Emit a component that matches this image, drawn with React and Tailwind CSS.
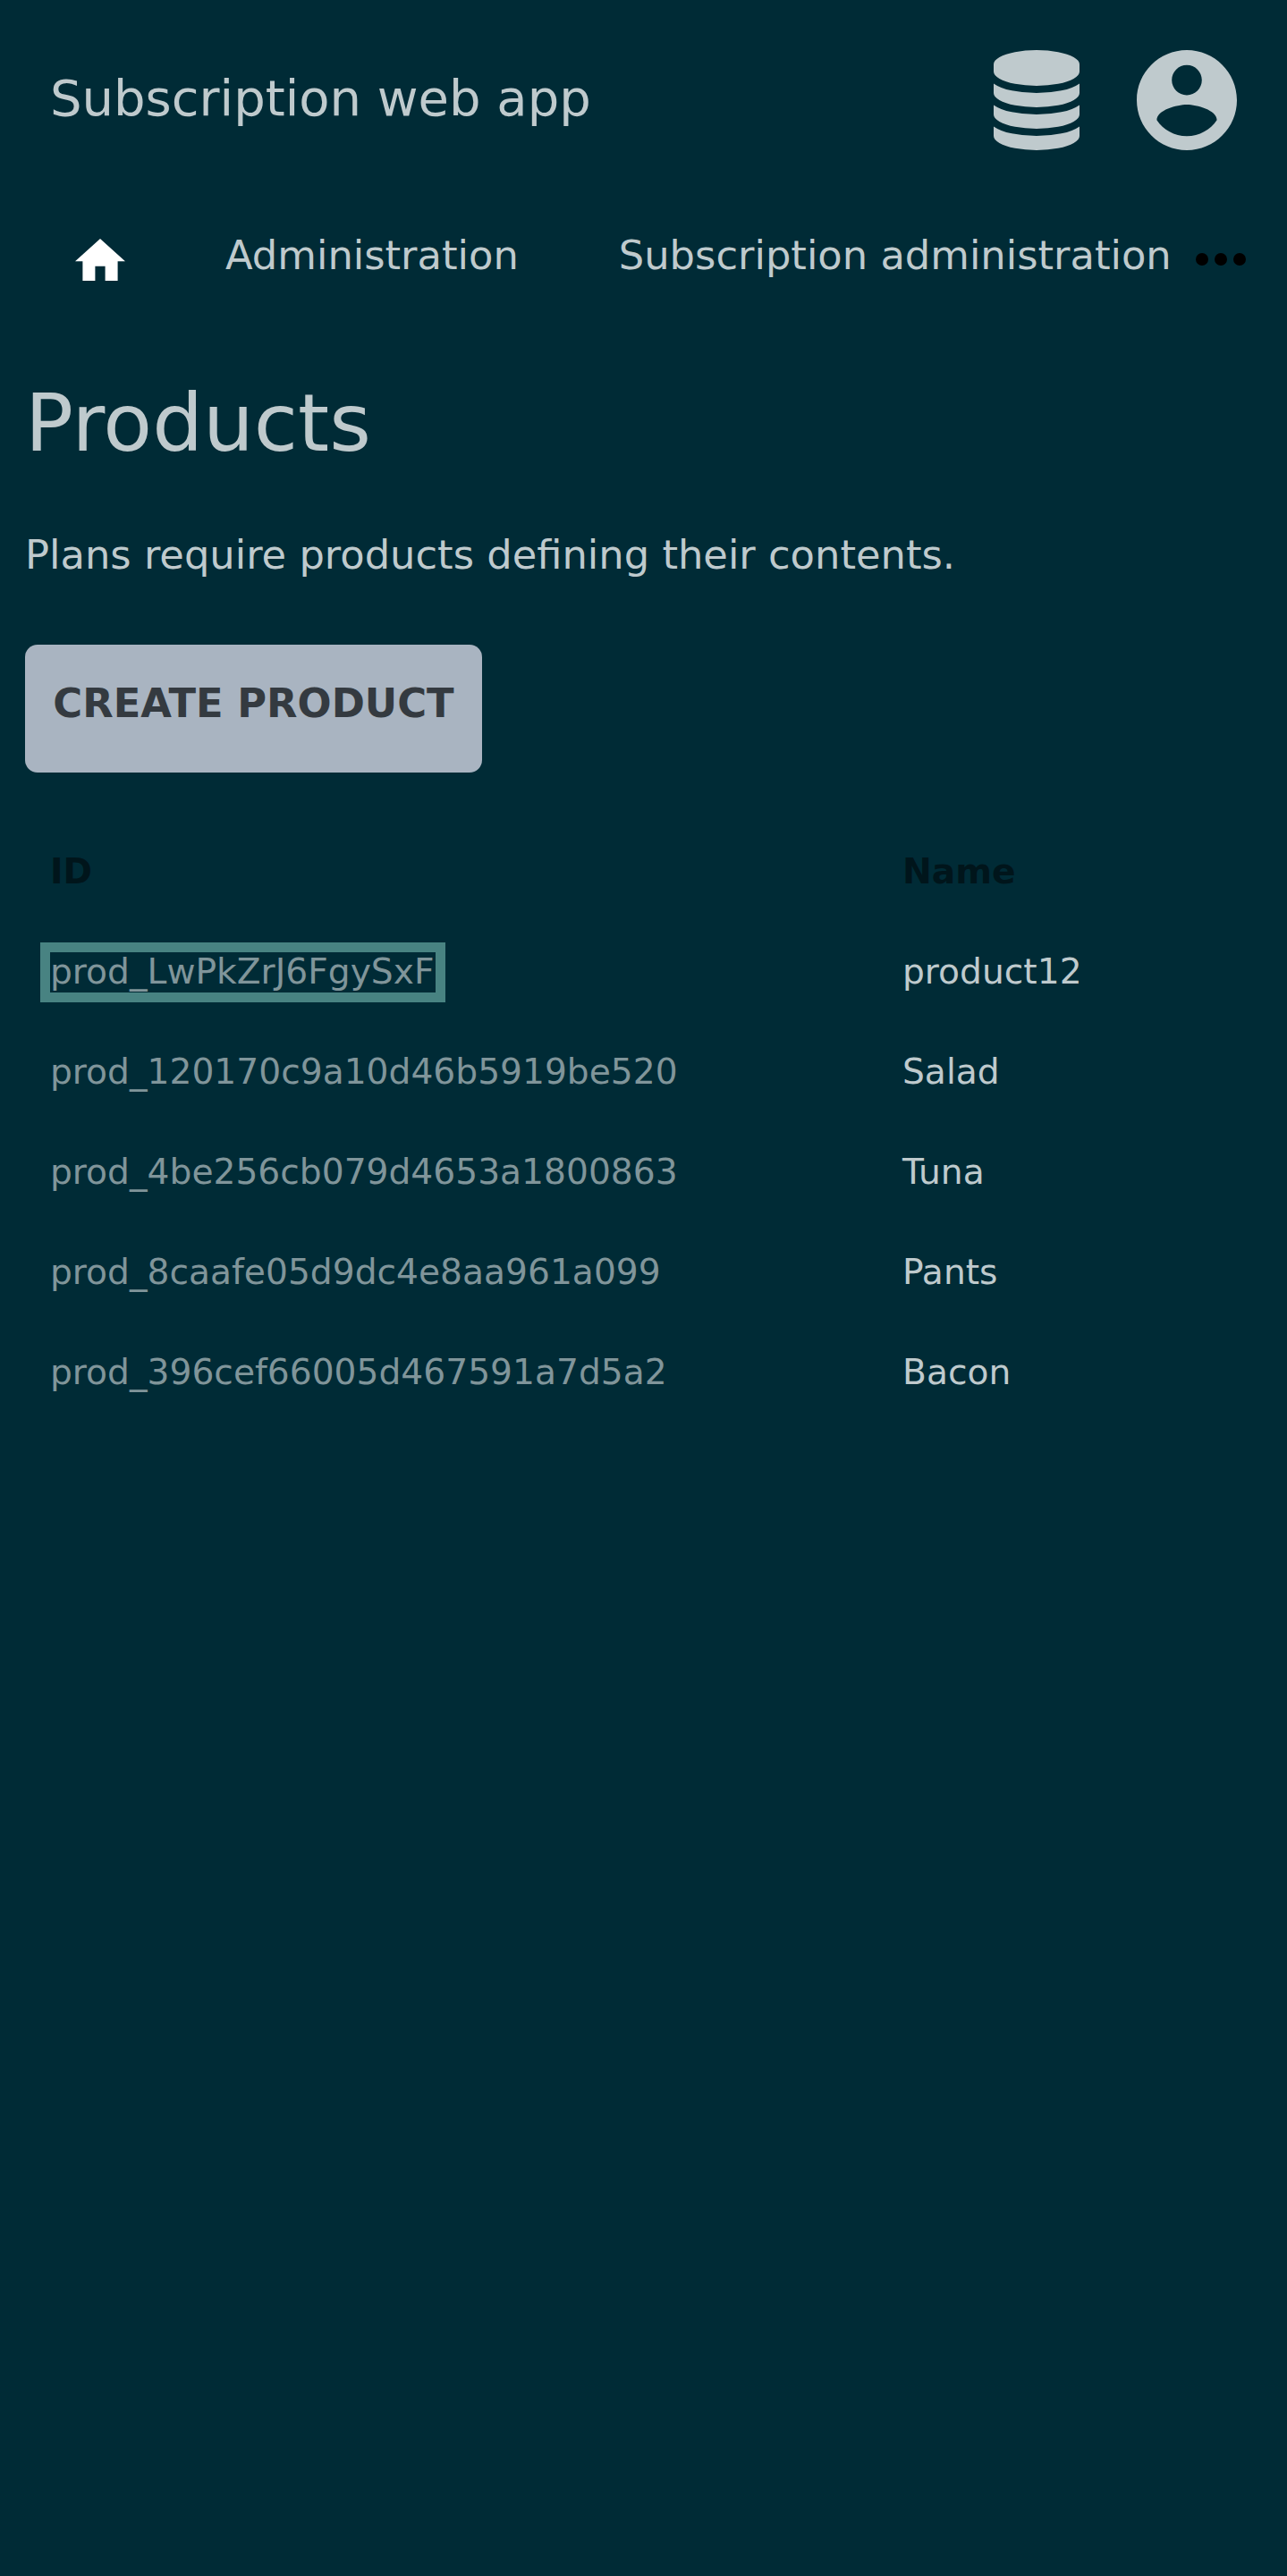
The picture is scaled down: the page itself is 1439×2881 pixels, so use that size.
const products = [
  { id: "prod_LwPkZrJ6FgySxF", name: "product12", focused: true },
  { id: "prod_120170c9a10d46b5919be520", name: "Salad" },
  { id: "prod_4be256cb079d4653a1800863", name: "Tuna" },
  { id: "prod_8caafe05d9dc4e8aa961a099", name: "Pants" },
  { id: "prod_396cef66005d467591a7d5a2", name: "Bacon" },
];

function DatabaseIcon() {
  return (
    <svg className="h-[112px] w-[96px]" viewBox="0 0 1536 1792" fill="currentColor">
      <path d="M768 768q237 0 443-43t325-127v170q0 69-103 128t-280 93.5-385 34.5-385-34.5-280-93.5-103-128v-170q119 84 325 127t443 43zm0 768q237 0 443-43t325-127v170q0 69-103 128t-280 93.5-385 34.5-385-34.5-280-93.5-103-128v-170q119 84 325 127t443 43zm0-384q237 0 443-43t325-127v170q0 69-103 128t-280 93.5-385 34.5-385-34.5-280-93.5-103-128v-170q119 84 325 127t443 43zm0-1152q208 0 385 34.5t280 93.5 103 128v128q0 69-103 128t-280 93.5-385 34.5-385-34.5-280-93.5-103-128v-128q0-69 103-128t280-93.5 385-34.5z" />
    </svg>
  );
}

function AccountIcon() {
  return (
    <svg className="h-[112px] w-[112px]" viewBox="2 2 20 20" fill="currentColor">
      <path d="M12 2C6.48 2 2 6.48 2 12s4.48 10 10 10 10-4.48 10-10S17.52 2 12 2zm0 3c1.66 0 3 1.34 3 3s-1.34 3-3 3-3-1.34-3-3 1.34-3 3-3zm0 14.2c-2.5 0-4.71-1.28-6-3.22.03-1.99 4-3.08 6-3.08 1.99 0 5.97 1.09 6 3.08-1.29 1.94-3.5 3.22-6 3.22z" />
    </svg>
  );
}

function HomeIcon() {
  return (
    <svg className="-mt-[1px] h-[47.6px] w-[56px] text-white" viewBox="2 3 20 17" fill="currentColor">
      <path d="M10 20v-6h4v6h5v-8h3L12 3 2 12h3v8z" />
    </svg>
  );
}

function MoreIcon() {
  return (
    <svg className="-mt-[2px] h-[14px] w-[56px] text-black" viewBox="4 10 16 4" fill="currentColor">
      <circle cx="6" cy="12" r="2" />
      <circle cx="12" cy="12" r="2" />
      <circle cx="18" cy="12" r="2" />
    </svg>
  );
}

export default function App() {
  return (
    <div className="min-h-[2881px] w-full overflow-hidden bg-[#002b36] font-['DejaVu_Sans',sans-serif] text-[#bfcacd]">
      <header className="flex h-[224px] items-center justify-between pr-[56.5px] pl-[56px]">
        <div className="-mt-[4px] text-[56px] leading-[66px] whitespace-nowrap">Subscription web app</div>
        <div className="flex items-center gap-[64px]">
          <DatabaseIcon />
          <AccountIcon />
        </div>
      </header>

      <nav className="flex h-[134px] items-center justify-between pr-[46px] pl-[84px]">
        <div className="flex items-center gap-[112px] text-[44.8px] leading-[54px] whitespace-nowrap">
          <HomeIcon />
          <a className="-mt-[10px]">Administration</a>
          <a className="-mt-[10px]">Subscription administration</a>
        </div>
        <MoreIcon />
      </nav>

      <main className="px-[28px]">
        <h1 className="pt-[61px] text-[89.6px] leading-[108px]">Products</h1>
        <p className="pt-[67px] text-[44.8px] leading-[54px]">Plans require products defining their contents.</p>
        <button className="mt-[73px] flex h-[143px] w-[511px] justify-center rounded-[14px] bg-[#a9b4c1] pt-[39px] text-[44.8px] leading-[54px] font-bold whitespace-nowrap text-[#343a40]">
          CREATE PRODUCT
        </button>

        <table className="mt-[55px] w-full table-fixed text-left text-[39.2px] leading-[46px]">
          <thead>
            <tr className="h-[112px] text-[#00151b]">
              <th className="w-[953px] px-[28px] font-bold">ID</th>
              <th className="px-[28px] font-bold">Name</th>
            </tr>
          </thead>
          <tbody>
            {products.map((product) => (
              <tr key={product.id} className="h-[112px]">
                <td className="px-[28px] text-[#80959a]">
                  <a
                    className={
                      product.focused
                        ? "-mb-[2px] inline-block h-[45px] w-[431px] leading-[43px] outline-[11.2px] outline-solid outline-[#488382]"
                        : ""
                    }
                  >
                    {product.id}
                  </a>
                </td>
                <td className="px-[28px]">{product.name}</td>
              </tr>
            ))}
          </tbody>
        </table>
      </main>
    </div>
  );
}
